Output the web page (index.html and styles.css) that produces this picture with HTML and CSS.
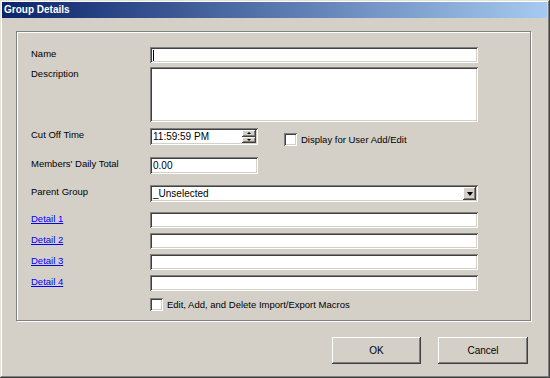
FILE: index.html
```html
<!DOCTYPE html>
<html>

<head>
    <link rel="stylesheet" href="styles.css">
</head>

<body>
    <div class="window">
        <div class="titlebar">Group Details</div>

        <div class="groupbox">
            <!-- Name -->
            <div class="row row-name">
                <div class="label">Name</div>
                <div class="field wide h16"><span class="caret"></span></div>
            </div>
            <!-- Description -->
            <div class="row row-desc">
                <div class="label">Description</div>
                <div class="field wide desc"></div>
            </div>
            <!-- Cut off time -->
            <div class="row row-time">
                <div class="label">Cut Off Time</div>
                <div class="field short h17">
                    <span class="value">11:59:59 PM</span>
                    <div class="spinner">
                        <div class="spin-btn"><span class="tri-up"></span></div>
                        <div class="spin-btn"><span class="tri-down"></span></div>
                    </div>
                </div>
                <div class="check-wrap user-edit">
                    <div class="checkbox"></div>
                    <span>Display for User Add/Edit</span>
                </div>
            </div>
            <!-- Daily total -->
            <div class="row row-total">
                <div class="label">Members' Daily Total</div>
                <div class="field short h17"><span class="value">0.00</span></div>
            </div>
            <!-- Parent group -->
            <div class="row row-parent">
                <div class="label">Parent Group</div>
                <div class="field wide h17">
                    <span class="value">_Unselected</span>
                    <div class="drop-btn"><span class="tri-down big"></span></div>
                </div>
            </div>
            <!-- Details -->
            <div class="row row-detail first">
                <div class="label"><a class="link" href="#">Detail 1</a></div>
                <div class="field wide h16"></div>
            </div>
            <div class="row row-detail">
                <div class="label"><a class="link" href="#">Detail 2</a></div>
                <div class="field wide h16"></div>
            </div>
            <div class="row row-detail">
                <div class="label"><a class="link" href="#">Detail 3</a></div>
                <div class="field wide h16"></div>
            </div>
            <div class="row row-detail">
                <div class="label"><a class="link" href="#">Detail 4</a></div>
                <div class="field wide h16"></div>
            </div>
            <!-- Macros -->
            <div class="row row-macros">
                <div class="label"></div>
                <div class="check-wrap">
                    <div class="checkbox"></div>
                    <span>Edit, Add, and Delete Import/Export Macros</span>
                </div>
            </div>
        </div>

        <div class="buttons">
            <div class="button">OK</div>
            <div class="button">Cancel</div>
        </div>
    </div>
</body>

</html>
```

FILE: styles.css
```css
body {
    margin: 0;
    font-family: "Liberation Sans", Arial, sans-serif;
    font-size: 9.5px;
    color: #000;
    background: #d4d0c8;
}

.window {
    width: 550px;
    height: 378px;
    box-sizing: border-box;
    padding: 2px 2px 0 2px;
    background: #d4d0c8;
    box-shadow: inset -1px -1px #404040, inset 1px 1px #e4e1db,
        inset -2px -2px #808080, inset 2px 2px #fff;
    display: flex;
    flex-direction: column;
}

.titlebar {
    height: 16px;
    line-height: 16px;
    padding-left: 2px;
    margin-right: 1px;
    color: #fff;
    font-weight: bold;
    font-size: 10px;
    background: linear-gradient(to right, #0a246a, #a6caf0);
}

.groupbox {
    margin: 13px 0 0 14px;
    width: 515px;
    height: 290px;
    box-sizing: border-box;
    border: 1px solid #808080;
    box-shadow: inset 1px 1px #fff, 1px 1px #fff;
    padding: 15px 0 0 14px;
    display: flex;
    flex-direction: column;
}

.row {
    display: flex;
    align-items: flex-start;
}

.row-desc {
    margin-top: 4px;
}

.row-time {
    margin-top: 6px;
}

.row-total,
.row-parent {
    margin-top: 11px;
}

.row-detail {
    margin-top: 5px;
}

.row-detail.first {
    margin-top: 10px;
}

.row-macros {
    margin-top: 7px;
}

.label {
    width: 119px;
    flex-shrink: 0;
    line-height: 14px;
}

.link {
    color: #0000ff;
    text-decoration: underline;
}

.field {
    position: relative;
    box-sizing: border-box;
    background: #fff;
    box-shadow: inset 1px 1px #808080, inset -1px -1px #fff,
        inset 2px 2px #404040, inset -2px -2px #d4d0c8;
    display: flex;
    align-items: center;
}

.wide {
    width: 328px;
}

.short {
    width: 108px;
}

.h16 {
    height: 16px;
}

.h17 {
    height: 17px;
}

.desc {
    height: 55px;
}

.value {
    padding-left: 3px;
    font-size: 10px;
    line-height: 13px;
}

.caret {
    width: 1px;
    height: 11px;
    margin-left: 3px;
    background: #000;
}

.spinner {
    position: absolute;
    right: 2px;
    top: 2px;
    width: 14px;
    display: flex;
    flex-direction: column;
}

.spin-btn,
.drop-btn {
    background: #d4d0c8;
    box-sizing: border-box;
    box-shadow: inset -1px -1px #404040, inset 1px 1px #fff,
        inset -2px -2px #808080;
    display: flex;
    align-items: center;
    justify-content: center;
}

.spin-btn {
    height: 6.5px;
}

.drop-btn {
    position: absolute;
    right: 2px;
    top: 2px;
    width: 13px;
    height: 13px;
}

.tri-up {
    width: 0;
    height: 0;
    border-left: 2px solid transparent;
    border-right: 2px solid transparent;
    border-bottom: 2px solid #000;
}

.tri-down {
    width: 0;
    height: 0;
    border-left: 2px solid transparent;
    border-right: 2px solid transparent;
    border-top: 2px solid #000;
}

.tri-down.big {
    border-left-width: 3.5px;
    border-right-width: 3.5px;
    border-top-width: 4px;
}

.check-wrap {
    display: flex;
    align-items: center;
    gap: 4px;
    line-height: 13px;
}

.check-wrap.user-edit {
    margin: 5px 0 0 26px;
}

.checkbox {
    width: 13px;
    height: 13px;
    box-sizing: border-box;
    background: #fff;
    box-shadow: inset 1px 1px #808080, inset -1px -1px #fff,
        inset 2px 2px #404040, inset -2px -2px #d4d0c8;
}

.buttons {
    display: flex;
    justify-content: flex-end;
    gap: 17px;
    margin: 16px 20px 0 0;
}

.button {
    height: 27px;
    line-height: 27px;
    text-align: center;
    font-size: 10px;
    box-sizing: border-box;
    background: #d4d0c8;
    box-shadow: inset -1px -1px #404040, inset 1px 1px #fff,
        inset -2px -2px #808080;
}

.button:first-child {
    width: 89px;
}

.button:last-child {
    width: 90px;
}
```
